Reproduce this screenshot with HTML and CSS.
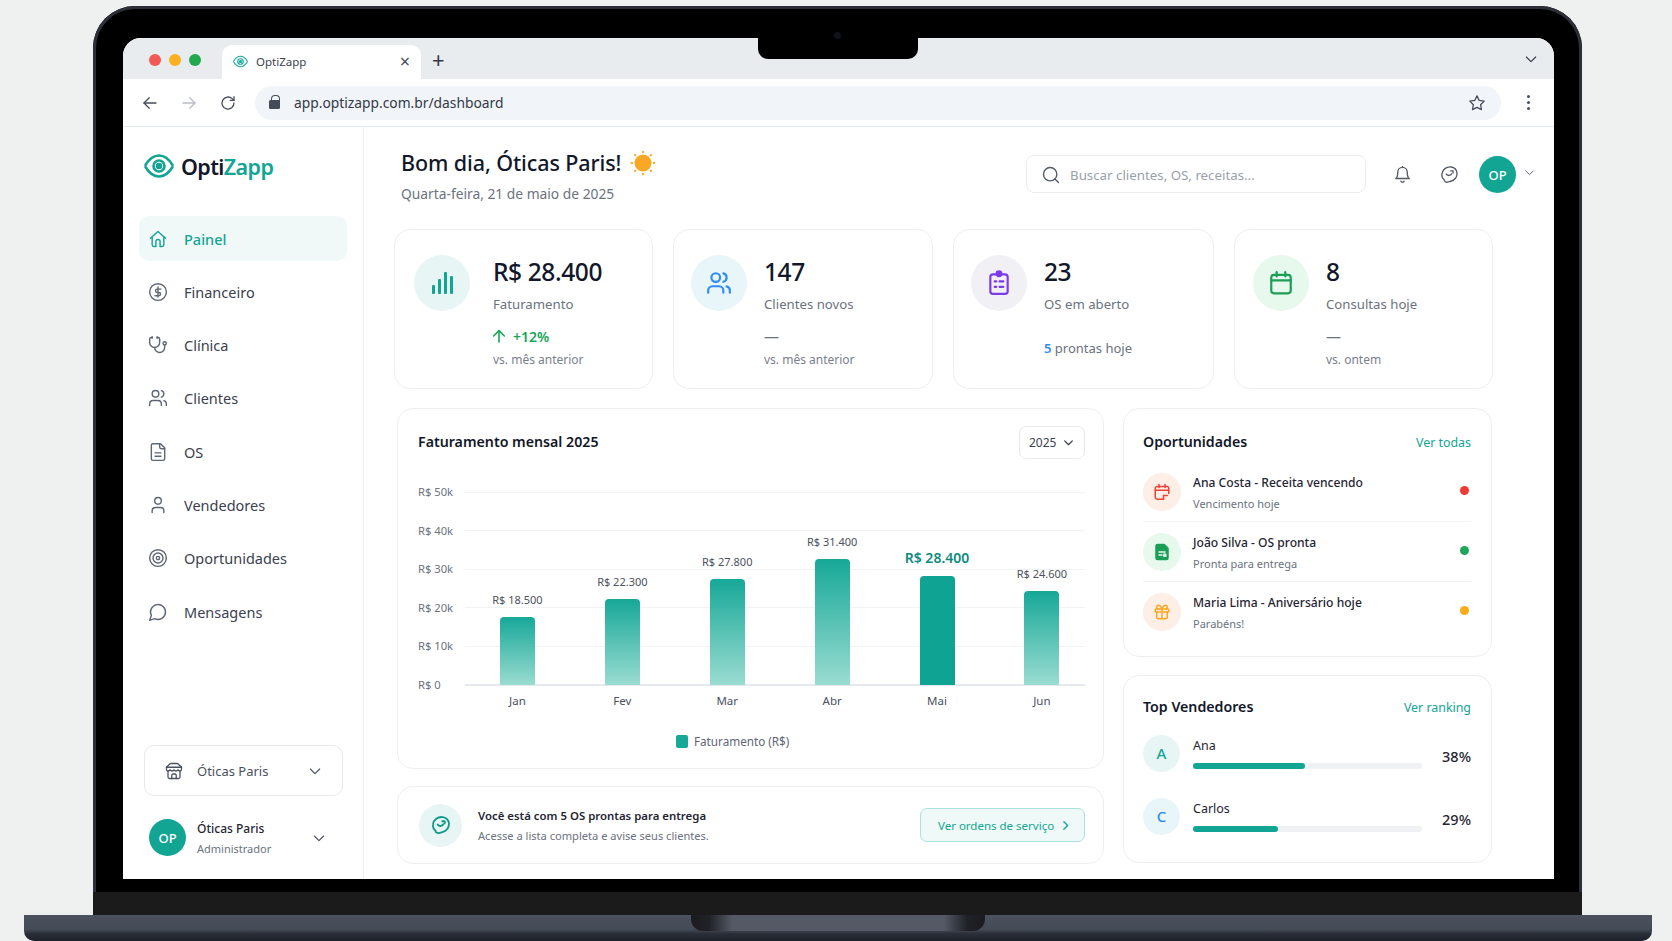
FILE: index.html
```html
<!DOCTYPE html>
<html lang="pt-BR">
<head>
<meta charset="utf-8">
<title>OptiZapp</title>
<link rel="stylesheet" href="styles.css">
</head>
<body>
<svg class="sprite" xmlns="http://www.w3.org/2000/svg">
	<symbol id="i-eye" viewBox="0 0 30 24"><path d="M1.5 11C6 3.5 11 1.5 15 1.5S24 3.5 28.5 11"/><path d="M1.5 13C6 20.5 11 22.5 15 22.5S24 20.5 28.5 13"/><circle cx="15" cy="12" r="5.5"/><circle class="solid" cx="15" cy="12" r="2"/></symbol>
	<symbol id="i-home" viewBox="0 0 24 24"><path d="M3 11 12 3l9 8"/><path d="M5 9.5V19a2 2 0 0 0 2 2h2.500v-6a2.500 2.500 0 0 1 5 0v6H17a2 2 0 0 0 2-2V9.500"/></symbol>
	<symbol id="i-dollar" viewBox="0 0 24 24"><circle cx="12" cy="12" r="10"/><path d="M15.5 8.500H11a2 2 0 0 0 0 4h2a2 2 0 0 1 0 4H8.500"/><path d="M12 6v12"/></symbol>
	<symbol id="i-steth" viewBox="0 0 24 24"><path d="M5 2v2"/><path d="M11 2v2"/><path d="M5 3H4a2 2 0 0 0-2 2v4a6 6 0 0 0 12 0V5a2 2 0 0 0-2-2h-1"/><path d="M8 15a6 6 0 0 0 12 0v-3"/><circle cx="20" cy="10" r="2"/></symbol>
	<symbol id="i-users" viewBox="0 0 24 24"><path d="M16 21v-2a4 4 0 0 0-4-4H6a4 4 0 0 0-4 4v2"/><circle cx="9" cy="7" r="4"/><path d="M22 21v-2a4 4 0 0 0-3-3.87"/><path d="M16 3.13a4 4 0 0 1 0 7.75"/></symbol>
	<symbol id="i-file" viewBox="0 0 24 24"><path d="M15 2H6a2 2 0 0 0-2 2v16a2 2 0 0 0 2 2h12a2 2 0 0 0 2-2V7Z"/><path d="M14 2v4a2 2 0 0 0 2 2h4"/><path d="M8.5 13h7"/><path d="M8.5 17h7"/></symbol>
	<symbol id="i-user" viewBox="0 0 24 24"><path d="M19 21v-2a4 4 0 0 0-4-4H9a4 4 0 0 0-4 4v2"/><circle cx="12" cy="7" r="4"/></symbol>
	<symbol id="i-target" viewBox="0 0 24 24"><circle cx="12" cy="12" r="10"/><circle cx="12" cy="12" r="6"/><circle cx="12" cy="12" r="2"/></symbol>
	<symbol id="i-msg" viewBox="0 0 24 24"><path d="M7.9 20A9 9 0 1 0 4 16.1L2 22Z"/></symbol>
	<symbol id="i-store" viewBox="0 0 24 24"><path d="m2 7 4.41-4.41A2 2 0 0 1 7.83 2h8.34a2 2 0 0 1 1.42.59L22 7"/><path d="M4 12v8a2 2 0 0 0 2 2h12a2 2 0 0 0 2-2v-8"/><path d="M15 22v-4a2 2 0 0 0-2-2h-2a2 2 0 0 0-2 2v4"/><path d="M2 7h20"/><path d="M22 7v3a2 2 0 0 1-2 2 3 3 0 0 1-2.700-1.500A3 3 0 0 1 14.700 12a3 3 0 0 1-2.700-1.500A3 3 0 0 1 9.300 12a3 3 0 0 1-2.600-1.500A3 3 0 0 1 4 12a2 2 0 0 1-2-2V7"/></symbol>
	<symbol id="i-chev" viewBox="0 0 24 24"><path d="m5 9 7 7 7-7"/></symbol>
	<symbol id="i-right" viewBox="0 0 24 24"><path d="m9 5 7 7-7 7"/></symbol>
	<symbol id="i-up" viewBox="0 0 24 24"><path d="M12 21V4"/><path d="m4 12 8-8 8 8"/></symbol>
	<symbol id="i-back" viewBox="0 0 24 24"><path d="M20 12H4"/><path d="m11 19-7-7 7-7"/></symbol>
	<symbol id="i-fwd" viewBox="0 0 24 24"><path d="M4 12h16"/><path d="m13 5 7 7-7 7"/></symbol>
	<symbol id="i-reload" viewBox="0 0 24 24"><path d="M20 12a8 8 0 1 1-2.5-5.800L20 8.500"/><path d="M20 3.500v5h-5"/></symbol>
	<symbol id="i-star" viewBox="0 0 24 24"><path d="M12 2.500l2.950 6.100 6.650.95-4.800 4.700 1.150 6.650L12 17.750 6.050 20.900l1.150-6.650-4.800-4.700 6.650-.95Z"/></symbol>
	<symbol id="i-search" viewBox="0 0 24 24"><circle cx="11" cy="11" r="8"/><path d="m21 21-4.300-4.300"/></symbol>
	<symbol id="i-bell" viewBox="0 0 24 24"><path d="M6 9a6 6 0 0 1 12 0c0 6 2.500 8 2.500 8h-17S6 15 6 9"/><path d="M10 20.500a2.200 2.200 0 0 0 4 0"/><path d="M12 3V2"/></symbol>
	<symbol id="i-chat" viewBox="0 0 24 24"><path d="M14 2.500c4 .5 7 3.500 7.500 7.500.5 5-3 9.500-8 10.500-1.500.3-2.500 1-4 1.200-2.500.3-4-1-4.200-3C3 17 2 14.500 2.500 11 3 6 8 1.800 14 2.500Z"/><path d="M8 11.500c2 2.500 5 2.200 7-.5"/><path d="M13.500 7.500l3 0 0 2.500"/></symbol>
	<symbol id="i-cal" viewBox="0 0 24 24"><rect x="3" y="4.500" width="18" height="17" rx="2.500"/><path d="M3 9.500h18"/><path d="M8 2v4"/><path d="M16 2v4"/></symbol>
	<symbol id="i-calx" viewBox="0 0 24 24"><path d="M21 14V7a2.500 2.500 0 0 0-2.500-2.500h-13A2.500 2.500 0 0 0 3 7v12a2.500 2.500 0 0 0 2.500 2.500H14"/><path d="M3 9.500h18"/><path d="M8 2v4"/><path d="M16 2v4"/><path d="M14 21.500V16.500h5"/></symbol>
	<symbol id="i-clip" viewBox="0 0 24 24"><rect x="4" y="4" width="16" height="18" rx="2.500"/><circle class="solid" cx="12" cy="3.500" r="2.200"/><path d="M8 10.500h1.500M12.500 10.500H16M8 15.500h1.500M12.500 15.500H16"/></symbol>
	<symbol id="i-doc" viewBox="0 0 24 24"><path class="solid" d="M6 2h9l5 5v13a2 2 0 0 1-2 2H6a2 2 0 0 1-2-2V4a2 2 0 0 1 2-2Z"/><path class="knock" d="M8 12h8M8 16h4M14.500 15h2.500v2.500h-2.500Z"/></symbol>
	<symbol id="i-gift" viewBox="0 0 24 24"><rect x="3" y="8" width="18" height="4" rx="1"/><path d="M12 8v13"/><path d="M19 12v7a2 2 0 0 1-2 2H7a2 2 0 0 1-2-2v-7"/><path d="M7.500 8a2.500 2.500 0 0 1 0-5C10 3 12 8 12 8s2-5 4.500-5a2.500 2.500 0 0 1 0 5"/></symbol>
	<symbol id="i-sun" viewBox="0 0 24 24"><circle class="solid" cx="12" cy="12" r="7"/><path d="M12 1.500v.5M12 22v.5M1.500 12H2M22 12h.5M4.600 4.600l.3.3M19.100 19.100l.3.3M4.600 19.400l.3-.3M19.100 4.900l.3-.3"/></symbol>
</svg>

<div class="lid">
	<div class="notch"><span class="camera"></span></div>
	<div class="screen">
		<div class="tabstrip">
			<div class="lights"><span class="light red"></span><span class="light yellow"></span><span class="light green"></span></div>
			<div class="tab">
				<svg class="ico tab-eye"><use href="#i-eye"/></svg>
				<span class="tab-title">OptiZapp</span>
				<span class="tab-close">×</span>
			</div>
			<span class="tab-new">+</span>
			<svg class="ico strip-chev"><use href="#i-chev"/></svg>
		</div>
		<div class="toolbar">
			<svg class="ico tool"><use href="#i-back"/></svg>
			<svg class="ico tool off"><use href="#i-fwd"/></svg>
			<svg class="ico tool"><use href="#i-reload"/></svg>
			<div class="url">
				<span class="lock"></span>
				<span class="url-text">app.optizapp.com.br/dashboard</span>
				<svg class="ico tool url-star"><use href="#i-star"/></svg>
			</div>
			<div class="dots"><i></i><i></i><i></i></div>
		</div>

		<div class="app">
			<aside class="sidebar">
				<div class="logo">
					<svg class="ico logo-eye"><use href="#i-eye"/></svg>
					<span class="logo-text">Opti<b>Zapp</b></span>
				</div>
				<nav class="nav">
					<a class="nav-item active"><svg class="ico"><use href="#i-home"/></svg>Painel</a>
					<a class="nav-item"><svg class="ico"><use href="#i-dollar"/></svg>Financeiro</a>
					<a class="nav-item"><svg class="ico"><use href="#i-steth"/></svg>Clínica</a>
					<a class="nav-item"><svg class="ico"><use href="#i-users"/></svg>Clientes</a>
					<a class="nav-item"><svg class="ico"><use href="#i-file"/></svg>OS</a>
					<a class="nav-item"><svg class="ico"><use href="#i-user"/></svg>Vendedores</a>
					<a class="nav-item"><svg class="ico"><use href="#i-target"/></svg>Oportunidades</a>
					<a class="nav-item"><svg class="ico"><use href="#i-msg"/></svg>Mensagens</a>
				</nav>
				<div class="store">
					<svg class="ico store-ico"><use href="#i-store"/></svg>
					<span>Óticas Paris</span>
					<svg class="ico store-chev"><use href="#i-chev"/></svg>
				</div>
				<div class="account">
					<span class="avatar">OP</span>
					<div class="account-text">
						<strong>Óticas Paris</strong>
						<small>Administrador</small>
					</div>
					<svg class="ico account-chev"><use href="#i-chev"/></svg>
				</div>
			</aside>

			<main class="main">
				<header class="header">
					<div>
						<h1>Bom dia, Óticas Paris! <svg class="ico sun"><use href="#i-sun"/></svg></h1>
						<p class="date">Quarta-feira, 21 de maio de 2025</p>
					</div>
					<div class="search">
						<svg class="ico"><use href="#i-search"/></svg>
						<span>Buscar clientes, OS, receitas...</span>
					</div>
					<svg class="ico head-ico bell"><use href="#i-bell"/></svg>
					<svg class="ico head-ico chat"><use href="#i-chat"/></svg>
					<span class="avatar head-avatar">OP</span>
					<svg class="ico head-chev"><use href="#i-chev"/></svg>
				</header>

				<section class="kpis">
					<div class="card kpi">
						<span class="kpi-ico teal">
							<svg class="bars-ico" viewBox="0 0 24 24"><rect x="2" y="14" width="3" height="9" rx="1"/><rect x="8" y="8" width="3" height="15" rx="1"/><rect x="14" y="1" width="3" height="22" rx="1"/><rect x="20" y="5" width="3" height="18" rx="1"/></svg>
						</span>
						<div class="kpi-body">
							<div class="kpi-value">R$ 28.400</div>
							<div class="kpi-label">Faturamento</div>
							<div class="kpi-trend up"><svg class="ico"><use href="#i-up"/></svg>+12%</div>
							<div class="kpi-note">vs. mês anterior</div>
						</div>
					</div>
					<div class="card kpi">
						<span class="kpi-ico blue"><svg class="ico"><use href="#i-users"/></svg></span>
						<div class="kpi-body">
							<div class="kpi-value">147</div>
							<div class="kpi-label">Clientes novos</div>
							<div class="kpi-trend">—</div>
							<div class="kpi-note">vs. mês anterior</div>
						</div>
					</div>
					<div class="card kpi">
						<span class="kpi-ico violet"><svg class="ico"><use href="#i-clip"/></svg></span>
						<div class="kpi-body">
							<div class="kpi-value">23</div>
							<div class="kpi-label">OS em aberto</div>
							<div class="kpi-ready"><b>5</b> prontas hoje</div>
						</div>
					</div>
					<div class="card kpi">
						<span class="kpi-ico mint"><svg class="ico"><use href="#i-cal"/></svg></span>
						<div class="kpi-body">
							<div class="kpi-value">8</div>
							<div class="kpi-label">Consultas hoje</div>
							<div class="kpi-trend">—</div>
							<div class="kpi-note">vs. ontem</div>
						</div>
					</div>
				</section>

				<section class="lower">
					<div class="col">
						<div class="card chart-card">
							<div class="chart-head">
								<h2>Faturamento mensal 2025</h2>
								<div class="year">2025 <svg class="ico"><use href="#i-chev"/></svg></div>
							</div>
							<div class="chart">
								<div class="axis">
									<span>R$ 50k</span><span>R$ 40k</span><span>R$ 30k</span><span>R$ 20k</span><span>R$ 10k</span><span>R$ 0</span>
								</div>
								<div class="plot">
									<div class="grid-lines"><i></i><i></i><i></i><i></i><i></i><i class="baseline"></i></div>
									<div class="bar-col"><span class="bar-val">R$ 18.500</span><span class="bar" style="height:68px"></span></div>
									<div class="bar-col"><span class="bar-val">R$ 22.300</span><span class="bar" style="height:86px"></span></div>
									<div class="bar-col"><span class="bar-val">R$ 27.800</span><span class="bar" style="height:106px"></span></div>
									<div class="bar-col"><span class="bar-val">R$ 31.400</span><span class="bar" style="height:126px"></span></div>
									<div class="bar-col now"><span class="bar-val">R$ 28.400</span><span class="bar" style="height:109px"></span></div>
									<div class="bar-col"><span class="bar-val">R$ 24.600</span><span class="bar" style="height:94px"></span></div>
								</div>
							</div>
							<div class="months"><span>Jan</span><span>Fev</span><span>Mar</span><span>Abr</span><span>Mai</span><span>Jun</span></div>
							<div class="legend"><i></i>Faturamento (R$)</div>
						</div>
						<div class="card banner">
							<span class="banner-ico"><svg class="ico"><use href="#i-chat"/></svg></span>
							<div class="banner-text">
								<strong>Você está com 5 OS prontas para entrega</strong>
								<small>Acesse a lista completa e avise seus clientes.</small>
							</div>
							<a class="banner-btn">Ver ordens de serviço <svg class="ico"><use href="#i-right"/></svg></a>
						</div>
					</div>

					<div class="col col-side">
						<div class="card opps">
							<div class="side-head"><h2>Oportunidades</h2><a>Ver todas</a></div>
							<div class="opp">
								<span class="opp-ico peach red-ico"><svg class="ico"><use href="#i-calx"/></svg></span>
								<div class="opp-text"><strong>Ana Costa - Receita vencendo</strong><small>Vencimento hoje</small></div>
								<i class="dot dot-red"></i>
							</div>
							<div class="opp">
								<span class="opp-ico mint"><svg class="ico"><use href="#i-doc"/></svg></span>
								<div class="opp-text"><strong>João Silva - OS pronta</strong><small>Pronta para entrega</small></div>
								<i class="dot dot-green"></i>
							</div>
							<div class="opp">
								<span class="opp-ico peach gold-ico"><svg class="ico"><use href="#i-gift"/></svg></span>
								<div class="opp-text"><strong>Maria Lima - Aniversário hoje</strong><small>Parabéns!</small></div>
								<i class="dot dot-gold"></i>
							</div>
						</div>
						<div class="card sellers">
							<div class="side-head"><h2>Top Vendedores</h2><a>Ver ranking</a></div>
							<div class="seller">
								<span class="seller-ini teal">A</span>
								<div class="seller-body"><span>Ana</span><div class="track"><i style="width:49%"></i></div></div>
								<b class="pct">38%</b>
							</div>
							<div class="seller">
								<span class="seller-ini blue">C</span>
								<div class="seller-body"><span>Carlos</span><div class="track"><i style="width:37%"></i></div></div>
								<b class="pct">29%</b>
							</div>
						</div>
					</div>
				</section>
			</main>
		</div>
	</div>
	<div class="chin"></div>
</div>
<div class="base"><span class="base-notch"></span></div>
</body>
</html>
```

FILE: styles.css
```css
*{margin: 0;padding: 0;box-sizing: border-box;}
html,body{
	height: 941px;
	overflow: hidden;
}
body{
	padding-top: 6px;
	font-family: "Noto Sans", "Open Sans", sans-serif;
	color: #1f2533;
	background: #eff0f0;
}
h1,h2,b,strong{font-weight: 600;}
small{display: block;}
i{display: block;}
.sprite{display: none;}
.ico{
	width: 20px;
	height: 20px;
	flex: none;
	fill: none;
	stroke: currentColor;
	stroke-width: 1.7;
	stroke-linecap: round;
	stroke-linejoin: round;
}
.solid{fill: currentColor;}
.knock{stroke: #e8f8ee;}

/* laptop */
.lid{
	position: relative;
	width: 1489px;
	margin-left: 93px;
	overflow: hidden;
	background: #000;
	border-radius: 42px 42px 0 0;
	box-shadow: inset 0 0 0 3px #2c2f37;
}
.notch{
	position: absolute;
	top: 32px;
	left: 665px;
	width: 160px;
	height: 21px;
	background: #000;
	border-radius: 0 0 10px 10px;
}
.camera{
	position: absolute;
	top: -6px;
	left: 76px;
	width: 7px;
	height: 7px;
	background: #10131a;
	border-radius: 50%;
}
.screen{
	width: 1431px;
	height: 841px;
	margin: 32px 28px 13px 30px;
	overflow: hidden;
	background: #fff;
	border-radius: 18px 18px 0 0;
}
.chin{
	height: 23px;
	background: #1b1b1c;
}
.base{
	position: relative;
	width: 1628px;
	height: 26px;
	margin-left: 24px;
	background: linear-gradient(#4b515d 0%, #454b56 55%, #2a2e38 72%, #1d212a 100%);
	border-radius: 0 0 10px 10px;
}
.base-notch{
	position: absolute;
	top: 0;
	left: 667px;
	width: 294px;
	height: 16px;
	background: linear-gradient(90deg, #1a1c22 0%, #1f2127 6%, #545965 14%, #545965 86%, #1f2127 94%, #1a1c22 100%);
	border-radius: 0 0 12px 12px;
}

/* browser */
.tabstrip{
	display: flex;
	align-items: flex-end;
	height: 41px;
	padding-left: 26px;
	background: #e9ecef;
}
.lights{
	display: flex;
	gap: 8px;
	align-self: flex-start;
	margin-top: 16px;
}
.light{
	width: 12px;
	height: 12px;
	border-radius: 50%;
}
.red{background: #f15a52;}
.yellow{background: #fbb01f;}
.green{background: #22a94f;}
.tab{
	display: flex;
	align-items: center;
	width: 199px;
	height: 34px;
	margin-left: 21px;
	padding: 0 11px 2px 11px;
	background: #fff;
	border-radius: 10px 10px 0 0;
}
.tab-eye{
	width: 15px;
	height: 13px;
	color: #18a999;
	stroke-width: 2.4;
}
.tab-title{
	margin-left: 8px;
	font-size: 11.5px;
	color: #3c4250;
}
.tab-close{
	margin-left: auto;
	font-size: 18px;
	line-height: 18px;
	color: #444a57;
}
.tab-new{
	align-self: center;
	margin-left: 11px;
	font-size: 22px;
	line-height: 22px;
	color: #333947;
}
.strip-chev{
	align-self: center;
	width: 16px;
	height: 16px;
	margin-left: auto;
	margin-right: 15px;
	color: #333947;
}
.toolbar{
	display: flex;
	align-items: center;
	gap: 21px;
	height: 48px;
	padding: 0 17px 0 18px;
	border-bottom: 1px solid #e3ebee;
}
.tool{
	width: 18px;
	height: 18px;
	color: #454b58;
}
.tool.off{color: #b8bcc5;}
.url{
	display: flex;
	align-items: center;
	flex: 1;
	height: 34px;
	margin-left: -3px;
	padding: 0 15px 0 13px;
	background: #f1f4f8;
	border-radius: 17px;
}
.lock{
	position: relative;
	width: 11px;
	height: 9px;
	margin: 4px 14px 0 1px;
	background: #454b58;
	border-radius: 1.5px;
}
.lock::before{
	content: "";
	position: absolute;
	left: 2px;
	top: -5px;
	width: 7px;
	height: 7px;
	border: 1.5px solid #454b58;
	border-bottom: none;
	border-radius: 4px 4px 0 0;
}
.url-text{
	font-size: 13.8px;
	color: #333947;
}
.url-star{margin-left: auto;}
.dots{
	display: flex;
	flex-direction: column;
	gap: 3px;
	width: 18px;
	margin-left: -3px;
	align-items: center;
}
.dots i{
	width: 3px;
	height: 3px;
	background: #4c5260;
	border-radius: 50%;
}

/* app */
.app{
	display: flex;
	height: 752px;
}
.sidebar{
	display: flex;
	flex-direction: column;
	flex: none;
	width: 241px;
	padding: 0 16px 22px;
	border-right: 1px solid #e9eef1;
}
.logo{
	display: flex;
	align-items: center;
	height: 28px;
	margin: 25px 0 36px 5px;
}
.logo-eye{
	width: 30px;
	height: 24px;
	color: #12a594;
	stroke-width: 2.6;
}
.logo-text{
	margin-left: 7px;
	font-size: 21.5px;
	font-weight: 600;
	letter-spacing: -.6px;
	color: #12172a;
}
.logo-text b{color: #12a594;}
.nav{
	display: flex;
	flex-direction: column;
	gap: 8.3px;
}
.nav-item{
	display: flex;
	align-items: center;
	gap: 16px;
	height: 45px;
	padding-left: 9px;
	font-size: 14.5px;
	color: #3b4150;
	border-radius: 10px;
}
.nav-item .ico{color: #5f6675;}
.nav-item.active{
	font-weight: 500;
	color: #12a594;
	background: #f1f8f8;
}
.nav-item.active .ico{color: #12a594;}
.store{
	display: flex;
	align-items: center;
	height: 51px;
	margin: auto 4px 0 5px;
	padding: 0 19px 0 20px;
	font-size: 13px;
	color: #4b5160;
	border: 1px solid #e6eaee;
	border-radius: 10px;
}
.store-ico{
	width: 18px;
	height: 18px;
	margin-right: 14px;
	color: #4b5160;
}
.store-chev{
	width: 16px;
	height: 16px;
	margin-left: auto;
}
.account{
	display: flex;
	align-items: center;
	margin: 23px 0 1px 10px;
}
.avatar{
	display: flex;
	align-items: center;
	justify-content: center;
	flex: none;
	width: 37px;
	height: 37px;
	font-size: 13px;
	font-weight: 500;
	color: #fff;
	background: #13a594;
	border-radius: 50%;
}
.account-text{margin-left: 11px;}
.account-text strong{
	display: block;
	font-size: 12px;
	font-weight: 500;
	line-height: 18px;
	color: #1f2533;
}
.account-text small{
	margin-top: 3px;
	font-size: 11px;
	line-height: 15px;
	color: #6b7280;
}
.account-chev{
	width: 16px;
	height: 16px;
	margin-left: auto;
	margin-right: 20px;
	color: #4b5160;
}
.main{
	flex: 1;
	min-width: 0;
}
.header{
	display: flex;
	align-items: flex-start;
	height: 102px;
	padding: 20px 18px 0 37px;
}
.header h1{
	display: flex;
	align-items: center;
	gap: 9px;
	font-size: 21.5px;
	font-weight: 500;
	line-height: 32px;
	letter-spacing: -.1px;
	color: #12172a;
}
.sun{
	width: 26px;
	height: 26px;
	color: #f9a825;
	stroke-width: 1.8;
}
.date{
	margin-top: 5px;
	font-size: 13.8px;
	line-height: 20px;
	color: #6b7280;
}
.search{
	display: flex;
	align-items: center;
	gap: 9px;
	width: 340px;
	height: 38px;
	margin: 8px 0 0 auto;
	padding: 1px 0 0 14px;
	font-size: 13.3px;
	color: #9a9faa;
	background: #fff;
	border: 1px solid #e8ecef;
	border-radius: 8px;
}
.search .ico{
	width: 20px;
	height: 20px;
	color: #545a68;
}
.head-ico{
	width: 19px;
	height: 19px;
	margin-top: 18px;
	color: #545a68;
}
.bell{margin-left: 27px;}
.chat{margin-left: 28px;}
.head-avatar{
	margin: 9px 0 0 20px;
}
.head-chev{
	width: 13px;
	height: 13px;
	margin: 19px 0 0 7px;
	color: #545a68;
}
.card{
	background: #fff;
	border: 1px solid #eceff2;
	border-radius: 16px;
}
.kpis{
	display: grid;
	grid-template-columns: 259px 260px 261px 259px;
	gap: 20px;
	margin-left: 30px;
}
.kpi{
	display: flex;
	gap: 17px;
	height: 160px;
	padding: 25px 10px 0 17px;
}
.kpi:first-child{
	gap: 23px;
	padding-left: 19px;
}
.kpi:last-child{
	padding-left: 18px;
}
.kpi-ico{
	display: flex;
	align-items: center;
	justify-content: center;
	flex: none;
	width: 56px;
	height: 56px;
	border-radius: 50%;
}
.kpi-ico .ico{
	width: 26px;
	height: 26px;
	stroke-width: 2;
}
.teal{color: #12a594;background: #e8f5f5;}
.blue{color: #2f8cf3;background: #e8f5f9;}
.violet{color: #7c3aed;background: #f1f1f5;}
.mint{color: #1b9e57;background: #e7f8ec;}
.bars-ico{
	width: 24px;
	height: 24px;
	fill: currentColor;
}
.kpi-body{padding-top: 2px;}
.kpi-value{
	font-size: 24.5px;
	font-weight: 500;
	line-height: 30px;
	letter-spacing: -.4px;
	color: #12172a;
}
.kpi-label{
	margin-top: 7px;
	font-size: 13.2px;
	line-height: 20px;
	color: #6b7280;
}
.kpi-trend{
	display: flex;
	align-items: center;
	gap: 6px;
	height: 20px;
	margin-top: 12px;
	font-size: 15px;
	color: #6b7280;
}
.kpi-trend.up{
	font-size: 14px;
	font-weight: 600;
	color: #18a558;
}
.kpi-trend.up .ico{
	width: 16px;
	height: 16px;
	margin-left: -2px;
	stroke-width: 2.4;
}
.kpi-note{
	margin-top: 5px;
	font-size: 12px;
	line-height: 18px;
	color: #7a808d;
}
.kpi-ready{
	margin-top: 24px;
	font-size: 13px;
	line-height: 20px;
	color: #6b7280;
}
.kpi-ready b{color: #2f8cf3;}
.lower{
	display: flex;
	gap: 19px;
	width: 1095px;
	margin: 19px 0 0 33px;
}
.col{
	display: flex;
	flex-direction: column;
	gap: 17px;
	width: 707px;
}
.col-side{
	gap: 18px;
	width: 369px;
}
.chart-card{
	height: 361px;
	padding: 17px 18px 0 20px;
}
.chart-head{
	display: flex;
	align-items: center;
	justify-content: space-between;
	height: 33px;
}
.chart-head h2{margin-top: -1px;}
h2{
	font-size: 14.2px;
	line-height: 26px;
	color: #12172a;
}
.year{
	display: flex;
	align-items: center;
	gap: 6px;
	width: 66px;
	height: 33px;
	padding-left: 9px;
	font-size: 12px;
	color: #3b4150;
	border: 1px solid #e8ecef;
	border-radius: 7px;
}
.year .ico{
	width: 13px;
	height: 13px;
	stroke-width: 2.4;
}
.chart{
	display: flex;
	height: 193px;
	margin-top: 33px;
}
.axis{
	display: flex;
	flex-direction: column;
	justify-content: space-between;
	flex: none;
	width: 47px;
	height: 209px;
	margin-top: -8px;
	font-size: 11.2px;
	line-height: 16px;
	color: #6b7280;
}
.plot{
	position: relative;
	display: flex;
	width: 620px;
}
.grid-lines{
	position: absolute;
	inset: 0 0 -1px;
	display: flex;
	flex-direction: column;
	justify-content: space-between;
}
.grid-lines i{
	height: 1px;
	background: #f0f2f4;
}
.grid-lines .baseline{
	height: 2px;
	background: #e6e9ed;
}
.bar-col{
	position: relative;
	display: flex;
	flex-direction: column;
	align-items: center;
	justify-content: flex-end;
	flex: 0 0 104.9px;
}
.bar-val{
	margin-bottom: 9px;
	font-size: 11px;
	line-height: 16px;
	white-space: nowrap;
	color: #4b5160;
}
.bar{
	width: 35px;
	background: linear-gradient(#17a898, #9adcd1);
	border-radius: 4px 4px 0 0;
}
.now .bar{background: #0fa393;}
.now .bar-val{
	margin-bottom: 9px;
	font-size: 14px;
	font-weight: 600;
	line-height: 18px;
	color: #0e8b7e;
}
.months{
	display: flex;
	margin: 7px 0 0 47px;
	font-size: 11.5px;
	line-height: 18px;
	color: #4b5160;
}
.months span{
	flex: 0 0 104.9px;
	text-align: center;
}
.legend{
	display: flex;
	align-items: center;
	gap: 6px;
	margin: 22px 0 0 258px;
	font-size: 11.7px;
	line-height: 18px;
	color: #5f6675;
}
.legend i{
	width: 12px;
	height: 13px;
	background: #17a898;
	border-radius: 2px;
}
.banner{
	display: flex;
	align-items: center;
	height: 78px;
	padding: 0 18px 0 21px;
}
.banner-ico{
	display: flex;
	align-items: center;
	justify-content: center;
	flex: none;
	width: 43px;
	height: 43px;
	color: #0f9a86;
	background: #e8f5f5;
	border-radius: 50%;
}
.banner-ico .ico{stroke-width: 2.2;}
.banner-text{margin-left: 16px;}
.banner-text strong{
	display: block;
	font-size: 11.4px;
	font-weight: 600;
	line-height: 18px;
	color: #1f2533;
}
.banner-text small{
	margin-top: 3px;
	font-size: 11.1px;
	line-height: 16px;
	color: #6b7280;
}
.banner-btn{
	display: flex;
	align-items: center;
	justify-content: space-between;
	width: 165px;
	height: 34px;
	margin-left: auto;
	padding: 0 12px 0 17px;
	font-size: 11.5px;
	white-space: nowrap;
	color: #12a594;
	background: #eef9f8;
	border: 1px solid #a9e1db;
	border-radius: 7px;
}
.banner-btn .ico{
	width: 13px;
	height: 13px;
	stroke-width: 2.4;
}
.opps{
	height: 249px;
	padding: 20px 20px 0 19px;
}
.sellers{
	height: 188px;
	padding: 18px 20px 0 19px;
}
.side-head{
	display: flex;
	align-items: center;
	justify-content: space-between;
	height: 26px;
}
.side-head a{
	font-size: 12.4px;
	color: #12a594;
}
.opps .side-head{margin-bottom: 7px;}
.opp{
	display: flex;
	align-items: center;
	gap: 12px;
	height: 60px;
	border-bottom: 1px solid #f0f2f4;
}
.opp:last-child{
	height: 59px;
	border-bottom: none;
}
.opp-ico{
	display: flex;
	align-items: center;
	justify-content: center;
	flex: none;
	width: 38px;
	height: 38px;
	border-radius: 50%;
}
.opp-ico .ico{
	width: 18px;
	height: 18px;
	stroke-width: 2;
}
.peach{background: #fdeee6;}
.red-ico{color: #ef4136;}
.gold-ico{color: #f9a825;}
.opp-text{padding-top: 2px;}
.opp-text strong{
	display: block;
	font-size: 12.1px;
	font-weight: 500;
	line-height: 20px;
	color: #1f2533;
}
.opp-text small{
	margin-top: 1px;
	font-size: 11px;
	line-height: 19px;
	color: #6b7280;
}
.dot{
	width: 9px;
	height: 9px;
	margin: 0 2px 3px auto;
	border-radius: 50%;
}
.dot-red{background: #ef3b34;}
.dot-green{background: #1ea65a;}
.dot-gold{background: #fbab18;}
.seller{
	display: flex;
	align-items: center;
	gap: 13px;
	height: 38px;
	margin-top: 14px;
}
.seller + .seller{margin-top: 25px;}
.seller-ini{
	display: flex;
	align-items: center;
	justify-content: center;
	flex: none;
	width: 37px;
	height: 37px;
	font-size: 15px;
	font-weight: 500;
	border-radius: 50%;
}
.seller-body{
	flex: none;
	width: 229px;
	padding-bottom: 1px;
	font-size: 12.5px;
	line-height: 18px;
	color: #1f2533;
}
.track{
	height: 6px;
	margin-top: 8px;
	background: #eff1f4;
	border-radius: 3px;
}
.track i{
	height: 100%;
	background: #12a594;
	border-radius: 3px;
}
.pct{
	margin: 5px 0 0 auto;
	font-size: 14.5px;
	font-weight: 500;
	color: #1f2533;
}
```
